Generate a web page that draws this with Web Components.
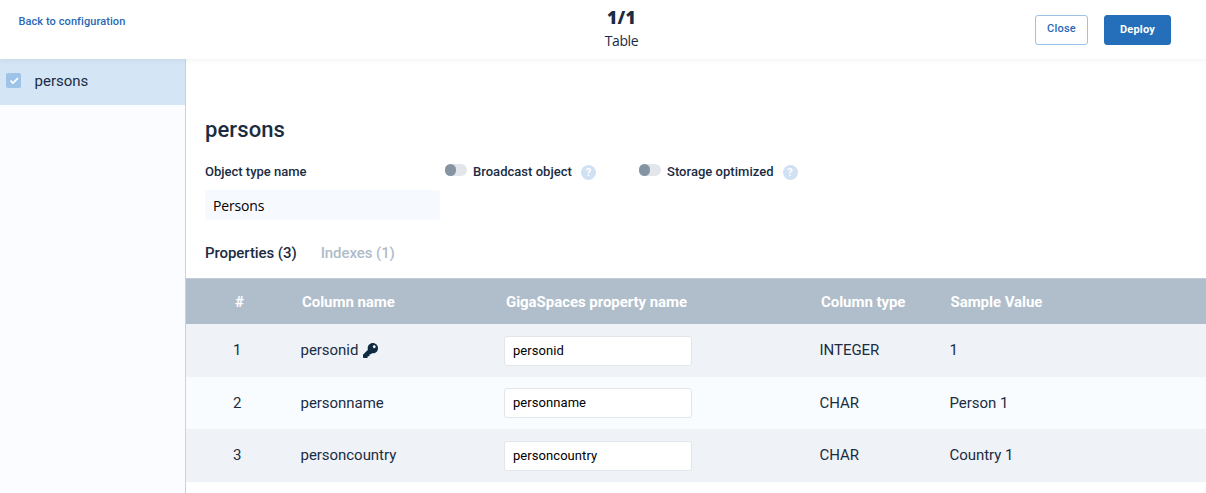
<!DOCTYPE html>
<html lang="en">
<head>
<meta charset="utf-8">
<title>Table configuration</title>
<style>
body { margin: 0; font-family: Roboto, sans-serif; color: #1a2c42; background: #fff; }
</style>
</head>
<body>
<config-page></config-page>
<script>
const define = (name, html) => customElements.define(name, class extends HTMLElement {
  connectedCallback() {
    if (this.shadowRoot) return;
    const root = this.attachShadow({ mode: 'open' });
    root.innerHTML = typeof html === 'function' ? html(this) : html;
  }
});

define('ui-button', `
<style>
:host { display: block; box-sizing: border-box; width: 53px; height: 30px; border: 1px solid #9cc3e6; border-radius: 3px;
  font-size: 11px; font-weight: 500; letter-spacing: .2px; line-height: 26px; text-align: center; color: #2a68b5; background: #fff; }
:host([primary]) { width: 67px; background: #256eb9; border-color: #256eb9; color: #fff; font-weight: 700; letter-spacing: .2px; line-height: 28px; }
</style><slot></slot>`);

define('top-bar', `
<style>
:host { display: grid; grid-template-columns: 1fr 200px 1fr; height: 59px; box-sizing: border-box; background: #fff;
  box-shadow: 0 1px 6px rgba(30,60,60,.07); position: relative; z-index: 1; }
.back { padding: 15px 0 0 18.5px; font-size: 11px; font-weight: 500; line-height: 13px; letter-spacing: .08px; color: #2a68b5; }
.center { text-align: center; font-family: "Open Sans", sans-serif; padding-left: 37px; }
.count { font-family: "Noto Sans", sans-serif; font-weight: 900; font-size: 17.5px; letter-spacing: .2px; line-height: 24px; padding-top: 5px; }
.kind { font-size: 14px; line-height: 20px; letter-spacing: -.4px; padding-top: 2px; }
.actions { display: flex; justify-content: flex-end; gap: 16px; padding: 15px 35px 0 0; }
</style>
<div class="back">Back to configuration</div>
<div class="center"><div class="count">1/1</div><div class="kind">Table</div></div>
<div class="actions"><ui-button>Close</ui-button><ui-button primary>Deploy</ui-button></div>`);

define('table-item', `
<style>
:host { display: flex; align-items: center; height: 46px; box-sizing: border-box; padding: 0 0 3px 6px; background: #d4e5f5; font-size: 15px; }
.box { width: 15px; height: 15px; border-radius: 2px; background: #9dc3e8; margin-right: 13.5px; }
svg { display: block; }
</style>
<div class="box"><svg width="15" height="15" viewBox="0 0 15 15"><path d="M4.5 7.7 7 10l5-4.8" fill="none" stroke="#fff" stroke-width="1.7"/></svg></div>
<span><slot></slot></span>`);

define('help-dot', `
<style>
:host { display: block; width: 15px; height: 15px; border-radius: 50%; background: #cfe1f3; color: #fff; font-size: 11px; font-weight: 700; line-height: 15px; text-align: center; }
</style>?`);

define('toggle-option', `
<style>
:host { display: flex; height: 20px; font-size: 13px; font-weight: 500; line-height: 20px; white-space: nowrap; letter-spacing: .03px; }
.track { width: 22px; height: 12px; border-radius: 6px; background: #e2e6ea; margin: 2px 6px 0 0; }
.knob { width: 11px; height: 12px; border-radius: 6px; background: #8594a3; }
help-dot { margin: 3px 0 0 9px; }
</style>
<div class="track"><div class="knob"></div></div><span><slot></slot></span><help-dot></help-dot>`);

define('text-field', `
<style>
:host { display: flex; align-items: center; box-sizing: border-box; width: 188px; height: 30px; padding: 0 0 1px 8px; border: 1px solid #e2e6ea;
  border-radius: 3px; background: #fff; color: #000; font-size: 13px; letter-spacing: .06px; }
:host([flat]) { width: 235px; padding: 1px 0 0 8px; border: 0; border-radius: 2px; background: #f6f9fe; font: 14px "Open Sans", sans-serif; letter-spacing: -.15px; }
</style><slot></slot>`);

define('key-icon', `
<style>:host { display: block; width: 15px; height: 15px; margin-left: 5px; } svg { display: block; }</style>
<svg width="15" height="15" viewBox="0 0 512 512"><path fill="#0f2a40" d="M512 176.001C512 273.203 433.202 352 336 352c-11.22 0-22.19-1.062-32.827-3.069l-24.012 27.014A23.999 23.999 0 0 1 261.223 384H224v40c0 13.255-10.745 24-24 24h-40v40c0 13.255-10.745 24-24 24H24c-13.255 0-24-10.745-24-24v-78.059c0-6.365 2.529-12.47 7.029-16.971l161.802-161.802C163.108 213.814 160 195.271 160 176 160 78.798 238.797.001 335.999 0 433.488-.001 512 78.511 512 176.001zM336 128c0 26.51 21.49 48 48 48s48-21.49 48-48-21.49-48-48-48-48 21.49-48 48z"/></svg>`);

define('property-head', `
<style>
:host { display: grid; grid-template-columns: 114px 204px 315px 129.5px 1fr; align-items: center; height: 46px; box-sizing: border-box;
  padding: 1px 0 0 2px; border-top: 1px solid #c2ccd6; background: #b0bdca; color: #fff; font-size: 15px; font-weight: 700; letter-spacing: -.05px; }
.n { padding-left: 47px; }
</style>
<span class="n">#</span><span>Column name</span><span>GigaSpaces property name</span><span>Column type</span><span>Sample Value</span>`);

define('property-row', el => `
<style>
:host { display: grid; grid-template-columns: 114.5px 203.5px 315.5px 130px 1fr; align-items: center; height: 53px; box-sizing: border-box; background: #eff3f8; font-size: 15px; letter-spacing: -.04px; }
:host([light]) { height: 52px; background: #f8fcff; }
.cell { padding-bottom: 1px; }
:host([light]) .cell { padding: 0; }
.n { padding-left: 47px; }
.name { display: flex; align-items: center; }
</style>
<span class="cell"><span class="n">${el.getAttribute('num')}</span></span>
<span class="cell name">${el.getAttribute('name')}${el.hasAttribute('key') ? '<key-icon></key-icon>' : ''}</span>
<text-field>${el.getAttribute('name')}</text-field>
<span class="cell">${el.getAttribute('type')}</span>
<span class="cell">${el.getAttribute('sample')}</span>`);

define('table-editor', `
<style>
:host { display: block; padding-top: 58px; }
h1 { margin: 0 0 0 19px; font-size: 22px; font-weight: 500; line-height: 26px; letter-spacing: .1px; }
.form { display: grid; grid-template-columns: 240px 194px 1fr; margin: 19px 0 0 19px; }
.label { font-size: 13px; font-weight: 500; line-height: 20px; }
text-field { margin: 8px 0 0 19px; }
.tabs { display: flex; gap: 24px; margin: 24px 0 0 19px; height: 34px; font-size: 15px; font-weight: 500; line-height: 18px; letter-spacing: -.07px; }
.off { color: #afbcc8; }
</style>
<h1>persons</h1>
<div class="form"><div class="label">Object type name</div><toggle-option>Broadcast object</toggle-option><toggle-option>Storage optimized</toggle-option></div>
<text-field flat>Persons</text-field>
<div class="tabs"><span>Properties (3)</span><span class="off">Indexes (1)</span></div>
<property-head></property-head>
<property-row num="1" name="personid" key type="INTEGER" sample="1"></property-row>
<property-row light num="2" name="personname" type="CHAR" sample="Person 1"></property-row>
<property-row num="3" name="personcountry" type="CHAR" sample="Country 1"></property-row>`);

define('config-page', `
<style>
:host { display: flex; flex-direction: column; height: 493px; overflow: hidden; }
.body { display: grid; grid-template-columns: 186px 1fr; flex: 1; }
aside { border-right: 1px solid #c9d2dc; background: #fafcff; }
</style>
<top-bar></top-bar>
<div class="body"><aside><table-item>persons</table-item></aside><table-editor></table-editor></div>`);
</script>
</body>
</html>
